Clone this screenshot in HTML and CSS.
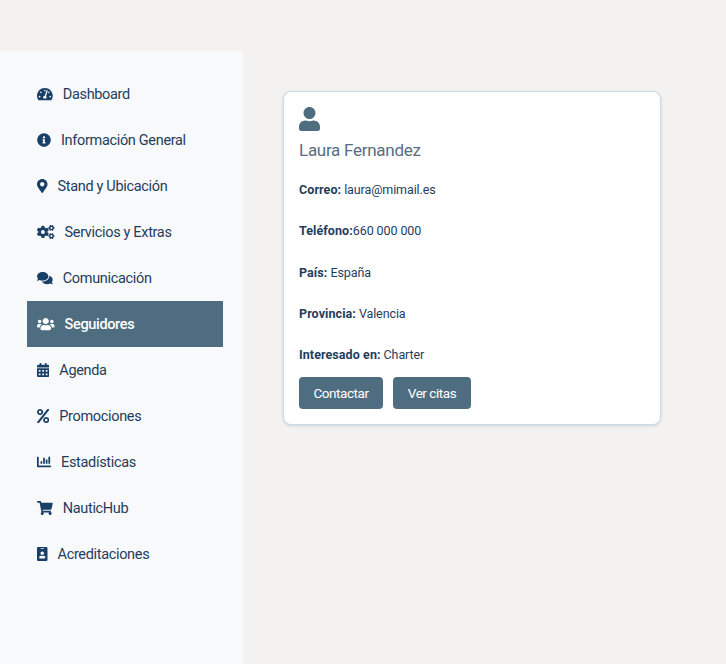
FILE: index.html
```html
<!DOCTYPE html>
<html lang="es">
<head>
<meta charset="utf-8">
<title>Seguidores</title>
<link rel="stylesheet" href="styles.css">
</head>
<body>
<div class="layout">
  <nav class="sidebar">
    <a class="nav-item" href="#"><svg class="icon" viewBox="0 0 576 512"><path d="M288 32C128.94 32 0 160.94 0 320c0 52.8 14.25 102.26 39.06 144.8 5.61 9.62 16.3 15.2 27.44 15.2h443c11.14 0 21.83-5.58 27.44-15.2C561.75 422.26 576 372.8 576 320c0-159.06-128.94-288-288-288zm0 64c14.71 0 26.58 10.13 30.32 23.65-1.11 2.26-2.64 4.23-3.45 6.67l-9.22 27.67c-5.13 3.49-10.97 6.01-17.64 6.01-17.67 0-32-14.33-32-32S270.33 96 288 96zM96 384c-17.67 0-32-14.33-32-32s14.33-32 32-32 32 14.33 32 32-14.33 32-32 32zm48-160c-17.67 0-32-14.33-32-32s14.33-32 32-32 32 14.33 32 32-14.33 32-32 32zm246.77-72.41l-61.33 184C343.13 347.33 352 364.54 352 384c0 11.72-3.38 22.55-8.88 32H232.88c-5.5-9.45-8.88-20.28-8.88-32 0-33.94 26.5-61.43 59.9-63.59l61.34-184.01c4.17-12.56 17.73-19.45 30.36-15.17 12.57 4.19 19.35 17.79 15.17 30.36zm14.66 57.2l15.52-46.55c3.47-1.29 7.13-2.23 11.05-2.23 17.67 0 32 14.33 32 32s-14.33 32-32 32c-11.38-.01-20.89-6.28-26.57-15.22zM480 384c-17.67 0-32-14.33-32-32s14.33-32 32-32 32 14.33 32 32-14.33 32-32 32z"/></svg><span>Dashboard</span></a>
    <a class="nav-item" href="#"><svg class="icon" viewBox="0 0 512 512"><path d="M256 8C119.043 8 8 119.083 8 256c0 136.997 111.043 248 248 248s248-111.003 248-248C504 119.083 392.957 8 256 8zm0 110c23.196 0 42 18.804 42 42s-18.804 42-42 42-42-18.804-42-42 18.804-42 42-42zm56 254c0 6.627-5.373 12-12 12h-88c-6.627 0-12-5.373-12-12v-24c0-6.627 5.373-12 12-12h12v-64h-12c-6.627 0-12-5.373-12-12v-24c0-6.627 5.373-12 12-12h64c6.627 0 12 5.373 12 12v100h12c6.627 0 12 5.373 12 12v24z"/></svg><span>Información General</span></a>
    <a class="nav-item" href="#"><svg class="icon" viewBox="0 0 384 512"><path d="M172.268 501.67C26.97 291.031 0 269.413 0 192 0 85.961 85.961 0 192 0s192 85.961 192 192c0 77.413-26.97 99.031-172.268 309.67-9.535 13.774-29.93 13.773-39.464 0zM192 272c44.183 0 80-35.817 80-80s-35.817-80-80-80-80 35.817-80 80 35.817 80 80 80z"/></svg><span>Stand y Ubicación</span></a>
    <a class="nav-item" href="#"><svg class="icon" viewBox="0 0 640 512"><path d="M512.1 191l-8.2 14.3c-3 5.3-9.4 7.5-15.1 5.4-11.8-4.4-22.6-10.7-32.1-18.6-4.6-3.8-5.8-10.5-2.8-15.7l8.2-14.3c-6.9-8-12.3-17.3-15.9-27.4h-16.5c-6 0-11.2-4.3-12.2-10.3-2-12-2.1-24.6 0-37.1 1-6 6.2-10.4 12.2-10.4h16.5c3.6-10.1 9-19.4 15.9-27.4l-8.2-14.3c-3-5.2-1.9-11.9 2.8-15.7 9.5-7.9 20.4-14.2 32.1-18.6 5.7-2.1 12.1.1 15.1 5.4l8.2 14.3c10.5-1.9 21.2-1.9 31.7 0L552 6.3c3-5.3 9.4-7.5 15.1-5.4 11.8 4.4 22.6 10.7 32.1 18.6 4.6 3.8 5.8 10.5 2.8 15.7l-8.2 14.3c6.9 8 12.3 17.3 15.9 27.4h16.5c6 0 11.2 4.3 12.2 10.3 2 12 2.1 24.6 0 37.1-1 6-6.2 10.4-12.2 10.4h-16.5c-3.6 10.1-9 19.4-15.9 27.4l8.2 14.3c3 5.2 1.9 11.9-2.8 15.7-9.5 7.9-20.4 14.2-32.1 18.6-5.7 2.1-12.1-.1-15.1-5.4l-8.2-14.3c-10.4 1.9-21.2 1.9-31.7 0zm-10.5-58.8c38.5 29.6 82.4-14.3 52.8-52.8-38.5-29.7-82.4 14.3-52.8 52.8zM386.3 286.1l33.7 16.8c10.1 5.8 14.5 18.1 10.5 29.1-8.9 24.2-26.4 46.4-42.6 65.8-7.4 8.9-20.2 11.1-30.3 5.3l-29.1-16.8c-16 13.7-34.6 24.6-54.9 31.7v33.6c0 11.6-8.3 21.6-19.7 23.6-24.6 4.2-50.4 4.4-75.9 0-11.5-2-20-11.9-20-23.6V418c-20.3-7.2-38.9-18-54.9-31.7L74 403c-10 5.8-22.9 3.6-30.3-5.3-16.2-19.4-33.3-41.6-42.2-65.7-4-10.9.4-23.2 10.5-29.1l33.3-16.8c-3.9-20.9-3.9-42.4 0-63.4L12 205.8c-10.1-5.8-14.6-18.1-10.5-29 8.9-24.2 26-46.4 42.2-65.8 7.4-8.9 20.2-11.1 30.3-5.3l29.1 16.8c16-13.7 34.6-24.6 54.9-31.7V57.1c0-11.5 8.2-21.5 19.6-23.5 24.6-4.2 50.5-4.4 76-.1 11.5 2 20 11.9 20 23.6v33.6c20.3 7.2 38.9 18 54.9 31.7l29.1-16.8c10-5.8 22.9-3.6 30.3 5.3 16.2 19.4 33.2 41.6 42.1 65.8 4 10.9.1 23.2-10 29.1l-33.7 16.8c3.9 21 3.9 42.5 0 63.5zm-117.6 21.1c59.2-77-28.7-164.9-105.7-105.7-59.2 77 28.7 164.9 105.7 105.7zm243.4 182.7l-8.2 14.3c-3 5.3-9.4 7.5-15.1 5.4-11.8-4.4-22.6-10.7-32.1-18.6-4.6-3.8-5.8-10.5-2.8-15.7l8.2-14.3c-6.9-8-12.3-17.3-15.9-27.4h-16.5c-6 0-11.2-4.3-12.2-10.3-2-12-2.1-24.6 0-37.1 1-6 6.2-10.4 12.2-10.4h16.5c3.6-10.1 9-19.4 15.9-27.4l-8.2-14.3c-3-5.2-1.9-11.9 2.8-15.7 9.5-7.9 20.4-14.2 32.1-18.6 5.7-2.1 12.1.1 15.1 5.4l8.2 14.3c10.5-1.9 21.2-1.9 31.7 0l8.2-14.3c3-5.3 9.4-7.5 15.1-5.4 11.8 4.4 22.6 10.7 32.1 18.6 4.6 3.8 5.8 10.5 2.8 15.7l-8.2 14.3c6.9 8 12.3 17.3 15.9 27.4h16.5c6 0 11.2 4.3 12.2 10.3 2 12 2.1 24.6 0 37.1-1 6-6.2 10.4-12.2 10.4h-16.5c-3.6 10.1-9 19.4-15.9 27.4l8.2 14.3c3 5.2 1.9 11.9-2.8 15.7-9.5 7.9-20.4 14.2-32.1 18.6-5.7 2.1-12.1-.1-15.1-5.4l-8.2-14.3c-10.4 1.9-21.2 1.9-31.7 0zM501.6 431c38.5 29.6 82.4-14.3 52.8-52.8-38.5-29.6-82.4 14.3-52.8 52.8z"/></svg><span>Servicios y Extras</span></a>
    <a class="nav-item" href="#"><svg class="icon" viewBox="0 0 576 512"><path d="M416 192c0-88.4-93.1-160-208-160S0 103.6 0 192c0 34.3 14.1 65.9 38 92-13.4 30.2-35.5 54.2-35.8 54.5-2.2 2.3-2.8 5.7-1.5 8.7S4.8 352 8 352c36.6 0 66.9-12.3 88.7-25 32.2 15.7 70.3 25 111.3 25 114.9 0 208-71.6 208-160zm122 220c23.9-26 38-57.7 38-92 0-66.9-53.5-124.2-129.3-148.1.9 6.6 1.3 13.3 1.3 20.1 0 105.9-107.7 192-240 192-10.8 0-21.3-.8-31.7-1.9C207.8 439.6 281.8 480 368 480c41 0 79.1-9.2 111.3-25 21.8 12.7 52.1 25 88.7 25 3.2 0 6.1-1.9 7.3-4.8 1.3-2.9.7-6.3-1.5-8.7-.3-.3-22.4-24.2-35.8-54.5z"/></svg><span>Comunicación</span></a>
    <a class="nav-item active" href="#"><svg class="icon" viewBox="0 0 640 512"><path d="M96 224c35.3 0 64-28.7 64-64s-28.7-64-64-64-64 28.7-64 64 28.7 64 64 64zm448 0c35.3 0 64-28.7 64-64s-28.7-64-64-64-64 28.7-64 64 28.7 64 64 64zm32 32h-64c-17.6 0-33.5 7.1-45.1 18.6 40.3 22.1 68.9 62 75.1 109.4h66c17.7 0 32-14.3 32-32v-32c0-35.3-28.7-64-64-64zm-256 0c61.9 0 112-50.1 112-112S381.9 32 320 32 208 82.1 208 144s50.1 112 112 112zm76.8 32h-8.3c-20.8 10-43.9 16-68.5 16s-47.6-6-68.5-16h-8.3C179.6 288 128 339.6 128 403.2V432c0 26.5 21.5 48 48 48h288c26.5 0 48-21.5 48-48v-28.8c0-63.6-51.6-115.2-115.2-115.2zm-223.7-13.4C161.5 263.1 145.6 256 128 256H64c-35.3 0-64 28.7-64 64v32c0 17.7 14.3 32 32 32h65.9c6.3-47.4 34.9-87.3 75.2-109.4z"/></svg><span>Seguidores</span></a>
    <a class="nav-item" href="#"><svg class="icon" viewBox="0 0 448 512"><path d="M0 464c0 26.5 21.5 48 48 48h352c26.5 0 48-21.5 48-48V192H0v272zm320-196c0-6.6 5.4-12 12-12h40c6.6 0 12 5.4 12 12v40c0 6.6-5.4 12-12 12h-40c-6.6 0-12-5.4-12-12v-40zm0 128c0-6.6 5.4-12 12-12h40c6.6 0 12 5.4 12 12v40c0 6.6-5.4 12-12 12h-40c-6.6 0-12-5.4-12-12v-40zM192 268c0-6.6 5.4-12 12-12h40c6.6 0 12 5.4 12 12v40c0 6.6-5.4 12-12 12h-40c-6.6 0-12-5.4-12-12v-40zm0 128c0-6.6 5.4-12 12-12h40c6.6 0 12 5.4 12 12v40c0 6.6-5.4 12-12 12h-40c-6.6 0-12-5.4-12-12v-40zM64 268c0-6.6 5.4-12 12-12h40c6.6 0 12 5.4 12 12v40c0 6.6-5.4 12-12 12H76c-6.6 0-12-5.4-12-12v-40zm0 128c0-6.6 5.4-12 12-12h40c6.6 0 12 5.4 12 12v40c0 6.6-5.4 12-12 12H76c-6.6 0-12-5.4-12-12v-40zM400 64h-48V16c0-8.8-7.2-16-16-16h-32c-8.8 0-16 7.2-16 16v48H160V16c0-8.8-7.2-16-16-16h-32c-8.8 0-16 7.2-16 16v48H48C21.5 64 0 85.5 0 112v48h448v-48c0-26.5-21.5-48-48-48z"/></svg><span>Agenda</span></a>
    <a class="nav-item" href="#"><svg class="icon" viewBox="0 0 448 512"><path d="M112 224c61.9 0 112-50.1 112-112S173.9 0 112 0 0 50.1 0 112s50.1 112 112 112zm0-160c26.5 0 48 21.5 48 48s-21.5 48-48 48-48-21.5-48-48 21.5-48 48-48zm224 224c-61.9 0-112 50.1-112 112s50.1 112 112 112 112-50.1 112-112-50.1-112-112-112zm0 160c-26.5 0-48-21.5-48-48s21.5-48 48-48 48 21.5 48 48-21.5 48-48 48zM392.3.2l31.6-.1c19.4-.1 30.9 21.8 19.7 37.8L77.4 501.6a23.95 23.95 0 0 1-19.6 10.2l-33.4.1c-19.5 0-30.9-21.9-19.7-37.8l368-463.7C377.2 4 384.5.2 392.3.2z"/></svg><span>Promociones</span></a>
    <a class="nav-item" href="#"><svg class="icon" viewBox="0 0 512 512"><path d="M332.8 320h38.4c6.4 0 12.8-6.4 12.8-12.8V172.8c0-6.4-6.4-12.8-12.8-12.8h-38.4c-6.4 0-12.8 6.4-12.8 12.8v134.4c0 6.4 6.4 12.8 12.8 12.8zm96 0h38.4c6.4 0 12.8-6.4 12.8-12.8V76.8c0-6.4-6.4-12.8-12.8-12.8h-38.4c-6.4 0-12.8 6.4-12.8 12.8v230.4c0 6.4 6.4 12.8 12.8 12.8zm-288 0h38.4c6.4 0 12.8-6.4 12.8-12.8v-70.4c0-6.4-6.4-12.8-12.8-12.8h-38.4c-6.4 0-12.8 6.4-12.8 12.8v70.4c0 6.4 6.4 12.8 12.8 12.8zm96 0h38.4c6.4 0 12.8-6.4 12.8-12.8V108.8c0-6.4-6.4-12.8-12.8-12.8h-38.4c-6.4 0-12.8 6.4-12.8 12.8v198.4c0 6.4 6.4 12.8 12.8 12.8zM496 384H64V80c0-8.84-7.16-16-16-16H16C7.16 64 0 71.16 0 80v336c0 17.67 14.33 32 32 32h464c8.84 0 16-7.16 16-16v-32c0-8.84-7.16-16-16-16z"/></svg><span>Estadísticas</span></a>
    <a class="nav-item" href="#"><svg class="icon" viewBox="0 0 576 512"><path d="M528.12 301.319l47.273-208C578.806 78.301 567.391 64 551.99 64H159.208l-9.166-44.81C147.758 8.021 137.93 0 126.529 0H24C10.745 0 0 10.745 0 24v16c0 13.255 10.745 24 24 24h69.883l70.248 343.435C147.325 417.1 136 435.222 136 456c0 30.928 25.072 56 56 56s56-25.072 56-56c0-15.674-6.447-29.835-16.824-40h209.647C430.447 426.165 424 440.326 424 456c0 30.928 25.072 56 56 56s56-25.072 56-56c0-22.172-12.888-41.332-31.579-50.405l5.517-24.276c3.413-15.018-8.002-29.319-23.403-29.319H218.117l-6.545-32h293.145c11.206 0 20.92-7.754 23.403-18.681z"/></svg><span>NauticHub</span></a>
    <a class="nav-item" href="#"><svg class="icon" viewBox="0 0 384 512"><path d="M336 0H48C21.5 0 0 21.5 0 48v416c0 26.5 21.5 48 48 48h288c26.5 0 48-21.5 48-48V48c0-26.5-21.5-48-48-48zM144 32h96c8.8 0 16 7.2 16 16s-7.2 16-16 16h-96c-8.8 0-16-7.2-16-16s7.2-16 16-16zm48 128c35.3 0 64 28.7 64 64s-28.7 64-64 64-64-28.7-64-64 28.7-64 64-64zm112 236.8c0 10.6-10 19.2-22.4 19.2H102.4C90 416 80 407.4 80 396.8v-19.2c0-31.8 30.1-57.6 67.2-57.6h5c12.3 5.1 25.7 8 39.8 8s27.6-2.9 39.8-8h5c37.1 0 67.2 25.8 67.2 57.6v19.2z"/></svg><span>Acreditaciones</span></a>
  </nav>
  <main class="content">
    <article class="card">
      <svg class="avatar" viewBox="0 0 448 512"><path d="M224 256c70.7 0 128-57.3 128-128S294.7 0 224 0 96 57.3 96 128s57.3 128 128 128zm89.6 32h-16.7c-22.2 10.2-46.9 16-72.9 16s-50.6-5.8-72.9-16h-16.7C60.2 288 0 348.2 0 422.4V464c0 26.5 21.5 48 48 48h352c26.5 0 48-21.5 48-48v-41.6c0-74.2-60.2-134.4-134.4-134.4z"/></svg>
      <h2 class="name">Laura Fernandez</h2>
      <p class="field"><strong>Correo:</strong> laura@mimail.es</p>
      <p class="field"><strong>Teléfono:</strong>660 000 000</p>
      <p class="field"><strong>País:</strong> España</p>
      <p class="field"><strong>Provincia:</strong> Valencia</p>
      <p class="field last"><strong>Interesado en:</strong> Charter</p>
      <div class="actions">
        <button class="btn btn-contact">Contactar</button>
        <button class="btn btn-dates">Ver citas</button>
      </div>
    </article>
  </main>
</div>
</body>
</html>
```
FILE: styles.css
```css
* { box-sizing: border-box; }
html, body { margin: 0; height: 100%; overflow: hidden; }
body {
  background: #f3f2f0;
  font-family: Roboto, "Liberation Sans", sans-serif;
  padding-top: 51px;
}
.layout { display: flex; height: 100%; }
.sidebar {
  width: 243px;
  flex: none;
  background: #f8f9fb;
  padding: 20px 20px 0 27px;
  display: flex;
  flex-direction: column;
}
.nav-item {
  display: flex;
  align-items: center;
  gap: 10px;
  height: 46px;
  padding-left: 10px;
  color: #1f3d5c;
  font-size: 14.5px;
  letter-spacing: -0.33px;
  text-decoration: none;
}
.nav-item .icon { height: 14px; width: auto; flex: none; fill: #1a3f66; }
.nav-item.active { background: #4f6d80; color: #fff; font-weight: 500; }
.nav-item.active .icon { fill: #fff; }
.content { flex: 1; padding: 40px; }
.card {
  width: 378px;
  height: 334px;
  background: #fff;
  border: 1px solid #c9dbe8;
  border-radius: 8px;
  box-shadow: 0 1px 3px rgba(40, 70, 100, .18);
  padding: 15px;
}
.avatar { display: block; height: 24px; width: 21px; fill: #4f6d80; }
.name {
  margin: 0 0 19px;
  padding-top: 8px;
  font-size: 17px;
  line-height: 22px;
  font-weight: 400;
  letter-spacing: -0.27px;
  color: #566e80;
}
.field {
  margin: 0 0 21.75px;
  font-size: 12.5px;
  line-height: 19.5px;
  letter-spacing: -0.1px;
  color: #1f3d5c;
}
.field.last { margin-bottom: 12px; }
.field strong { font-weight: 700; letter-spacing: 0.08px; }
.actions { display: flex; gap: 10px; }
.btn {
  height: 32px;
  border: 0;
  border-radius: 4px;
  background: #4f6d80;
  color: #fff;
  font: inherit;
  font-size: 13.5px;
  letter-spacing: -0.45px;
}
.btn-contact { width: 84px; }
.btn-dates { width: 78px; }
```
